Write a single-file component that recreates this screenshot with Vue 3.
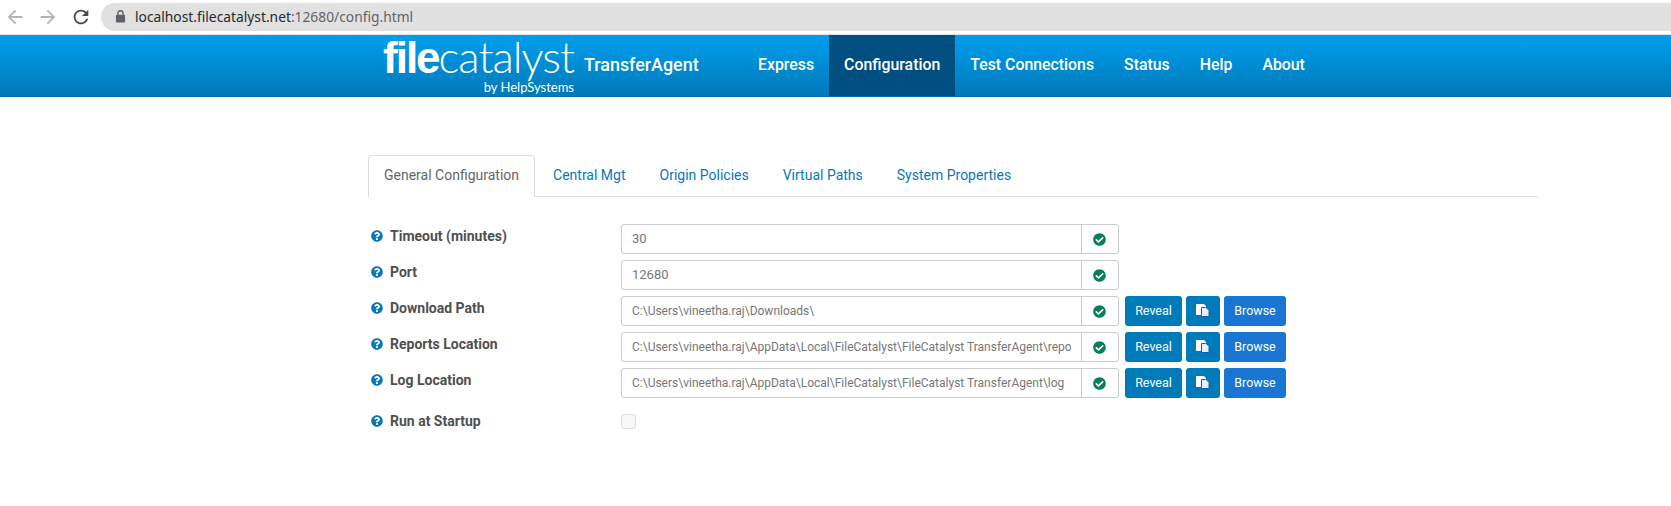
<script setup>
const tabs = ['Central Mgt', 'Origin Policies', 'Virtual Paths', 'System Properties']
const nav = ['Express', 'Configuration', 'Test Connections', 'Status', 'Help', 'About']
const rows = [
  { label: 'Timeout (minutes)', value: '30' },
  { label: 'Port', value: '12680' },
  { label: 'Download Path', value: 'C:\\Users\\vineetha.raj\\Downloads\\', small: true, path: true },
  { label: 'Reports Location', value: 'C:\\Users\\vineetha.raj\\AppData\\Local\\FileCatalyst\\FileCatalyst TransferAgent\\reports', small: true, path: true },
  { label: 'Log Location', value: 'C:\\Users\\vineetha.raj\\AppData\\Local\\FileCatalyst\\FileCatalyst TransferAgent\\log', small: true, path: true },
]
const question = 'M504 256c0 136.997-111.043 248-248 248S8 392.997 8 256C8 119.083 119.043 8 256 8s248 111.083 248 248zM262.655 90c-54.497 0-89.255 22.957-116.549 63.758-3.536 5.286-2.353 12.415 2.715 16.258l34.699 26.31c5.205 3.947 12.621 3.008 16.665-2.122 17.864-22.658 30.113-35.797 57.303-35.797 20.429 0 45.698 13.148 45.698 32.958 0 14.976-12.363 22.667-32.534 33.976C247.128 238.528 216 254.941 216 296v4c0 6.627 5.373 12 12 12h56c6.627 0 12-5.373 12-12v-1.333c0-28.462 83.186-29.647 83.186-106.667 0-58.002-60.165-102-116.531-102zM256 338c-25.365 0-46 20.635-46 46 0 25.364 20.635 46 46 46s46-20.636 46-46c0-25.365-20.635-46-46-46z'
const check = 'M504 256c0 136.967-111.033 248-248 248S8 392.967 8 256 119.033 8 256 8s248 111.033 248 248zM227.314 387.314l184-184c6.248-6.248 6.248-16.379 0-22.627l-22.627-22.627c-6.248-6.249-16.379-6.249-22.628 0L216 308.118l-70.059-70.059c-6.248-6.248-16.379-6.248-22.628 0l-22.627 22.627c-6.248 6.248-6.248 16.379 0 22.627l104 104c6.249 6.249 16.379 6.249 22.628.001z'
</script>

<template>
  <div class="page">
    <div class="chrome">
      <svg class="nav-ic dim" viewBox="0 0 24 24"><path d="M20 11H7.830l5.590-5.590L12 4l-8 8 8 8 1.410-1.410L7.830 13H20v-2z" /></svg>
      <svg class="nav-ic dim" viewBox="0 0 24 24"><path d="M12 4l-1.410 1.410L16.170 11H4v2h12.170l-5.580 5.590L12 20l8-8z" /></svg>
      <svg class="nav-ic dark" viewBox="0 0 24 24"><path d="M17.650 6.350C16.200 4.900 14.210 4 12 4c-4.420 0-7.990 3.580-7.990 8s3.570 8 7.990 8c3.730 0 6.840-2.550 7.730-6h-2.080c-.82 2.330-3.040 4-5.650 4-3.310 0-6-2.690-6-6s2.690-6 6-6c1.660 0 3.140.69 4.220 1.780L13 11h7V4l-2.350 2.350z" /></svg>
      <div class="omnibox">
        <svg class="lock" viewBox="0 0 12 14"><path d="M10 5H9.500V3.500a3.500 3.500 0 0 0-7 0V5H2a1 1 0 0 0-1 1v6.500a1 1 0 0 0 1 1h8a1 1 0 0 0 1-1V6a1 1 0 0 0-1-1zM4 3.500a2 2 0 0 1 4 0V5H4V3.500z" /></svg>
        <span class="url"><span class="host">localhost.filecatalyst.net</span>:12680/config.html</span>
      </div>
    </div>

    <header class="header">
      <div class="logo">
        <div class="wordmark"><b>file</b>catalyst</div>
        <div class="by">by HelpSystems</div>
      </div>
      <div class="product">TransferAgent</div>
      <nav class="menu">
        <a v-for="n in nav" :key="n" class="menu-item" :class="{ active: n === 'Configuration' }">{{ n }}</a>
      </nav>
    </header>

    <main class="content">
      <div class="tabs">
        <a class="tab active">General Configuration</a>
        <a v-for="t in tabs" :key="t" class="tab">{{ t }}</a>
      </div>

      <div class="form">
        <div v-for="r in rows" :key="r.label" class="row">
          <label class="label">
            <svg class="help" viewBox="0 0 512 512"><path :d="question" /></svg>
            {{ r.label }}
          </label>
          <div class="group">
            <div class="input" :class="{ small: r.small }"><span class="val">{{ r.value }}</span></div>
            <div class="addon"><svg class="ok" viewBox="0 0 512 512"><path :d="check" /></svg></div>
          </div>
          <template v-if="r.path">
            <button class="btn reveal">Reveal</button>
            <button class="btn copy">
              <svg viewBox="0 0 14 13" width="14" height="13">
                <path fill="#fff" d="M0 0h8l2 2v9H0z" />
                <path fill="#e6f0ff" stroke="#0a5fb0" stroke-width="1" d="M5.500 3.500h4l3.500 3.500v5.500H5.500z" />
                <path fill="#fff" d="M9.500 3.500l3.500 3.500H9.500z" />
              </svg>
            </button>
            <button class="btn browse">Browse</button>
          </template>
        </div>
        <div class="row startup">
          <label class="label">
            <svg class="help" viewBox="0 0 512 512"><path :d="question" /></svg>
            Run at Startup
          </label>
          <span class="checkbox"></span>
        </div>
      </div>
    </main>
  </div>
</template>

<style>
html, body { margin: 0; background: #fff; }
</style>

<style scoped>
.page { width: 1671px; height: 506px; overflow: hidden; font-family: Roboto, sans-serif; background: #fff; }

.chrome { height: 35px; display: flex; align-items: center; padding-left: 4px; box-sizing: border-box; padding-bottom: 1px; border-bottom: 1px solid #e3e3e3; }
.nav-ic { width: 22px; height: 22px; margin-right: 11px; flex: none; }
.nav-ic.dim path { fill: #b4b4b4; }
.nav-ic.dark path { fill: #4a4a4a; }
.nav-ic.dark { margin-right: 9px; }
.omnibox { flex: 1; height: 28px; background: #e1e1e1; border-radius: 14px 0 0 14px; display: flex; align-items: center; padding-left: 14px; }
.lock { width: 11px; height: 13px; margin-right: 9px; }
.lock path { fill: #5f6368; fill-rule: evenodd; }
.url { font-family: "Noto Sans", sans-serif; font-size: 13.800px; color: #606468; white-space: nowrap; }
.host { color: #26292d; }

.header { height: 62px; box-sizing: border-box; display: flex; padding-left: 383px; background: linear-gradient(#009fee, #0079b8); border-bottom: 1px solid #006fa8; color: #fff; }
.logo { width: 191px; height: 61px; position: relative; flex: none; }
.wordmark { font-family: Lato, sans-serif; font-weight: 300; font-size: 44px; letter-spacing: -1px; line-height: 42px; white-space: nowrap; }
.wordmark b { font-weight: 700; font-family: "Liberation Sans", sans-serif; letter-spacing: -2px; }
.by { font-family: Lato, sans-serif; font-size: 13px; line-height: 16px; text-align: right; }
.product { width: 143px; margin-left: 10px; padding-top: 19px; font-size: 17.900px; font-weight: 500; line-height: 21px; flex: none; }
.menu { display: flex; margin-left: 16px; }
.menu-item { padding: 0 15px; font-size: 15.850px; font-weight: 500; line-height: 60px; height: 61px; }
.menu-item.active { background: #004f80; }

.content { width: 1170px; margin: 58px 0 0 368px; }
.tabs { display: flex; height: 42px; box-sizing: border-box; border-bottom: 1px solid #ddd; }
.tab { height: 42px; box-sizing: border-box; padding: 9px 15px 0; margin-right: 2px; font-size: 14px; line-height: 20px; color: #0a77b8; border: 1px solid transparent; border-bottom: 0; }
.tab.active { color: #666; background: #fff; border-color: #ddd; border-radius: 4px 4px 0 0; margin-right: 2px; }

.form { margin-top: 27px; }
.row { display: flex; height: 30px; margin-bottom: 6px; align-items: flex-start; }
.label { width: 253px; flex: none; display: flex; align-items: center; height: 24px; font-size: 14px; font-weight: 700; color: #4f4f4f; padding-left: 3px; box-sizing: border-box; }
.help { width: 12px; height: 12px; margin-right: 7px; flex: none; }
.help path { fill: #0a77b8; }
.group { width: 498px; height: 30px; flex: none; display: flex; border: 1px solid #ccc; border-radius: 3px; box-sizing: border-box; }
.input { width: 460px; flex: none; box-sizing: border-box; padding: 0 10px; font-size: 13px; line-height: 28px; color: #777; border-right: 1px solid #ccc; }
.input.small { font-size: 12px; }
.val { display: block; overflow: hidden; white-space: nowrap; }
.addon { flex: 1; display: flex; align-items: center; justify-content: center; padding-right: 1px; }
.ok { width: 13px; height: 13px; }
.ok path { fill: #0b7d5c; }
.btn { height: 30px; border: 0; border-radius: 3px; color: #fff; font-family: Roboto, sans-serif; font-size: 12.500px; font-weight: 400; padding: 0 0 1px; margin-left: 4px; display: flex; align-items: center; justify-content: center; flex: none; }
.reveal { width: 57px; background: #007bba; margin-left: 6px; }
.copy { width: 34px; background: #007bba; }
.browse { width: 62px; background: #1976d2; }
.startup { margin-top: 11px; }
.checkbox { width: 15px; height: 15px; margin-top: 5px; border: 1px solid #ddd; border-radius: 3px; box-sizing: border-box; background: #f8f8f8; }
</style>
